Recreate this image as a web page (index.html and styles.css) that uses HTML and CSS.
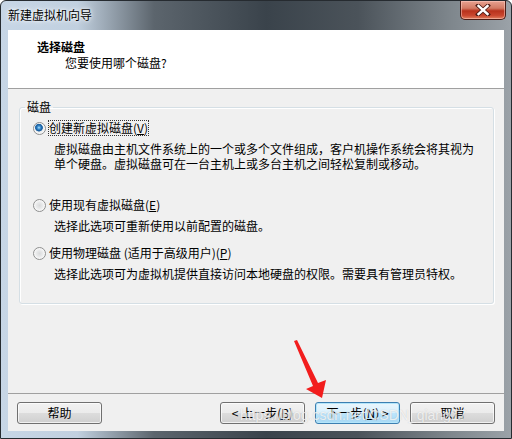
FILE: index.html
```html
<!DOCTYPE html>
<html lang="zh-CN">
<head>
    <meta charset="UTF-8">
    <title>新建虚拟机向导</title>
    <link rel="stylesheet" href="styles.css">
</head>
<body>
    <div class="window">
        <div class="titlebar">
            <span class="title">新建虚拟机向导</span>
            <div class="close-btn">
                <svg width="16" height="12" viewBox="0 0 16 12">
                    <path d="M3 1.5 L13 10.5 M13 1.5 L3 10.5" stroke="#4a1a14" stroke-width="4" stroke-linecap="square"/>
                    <path d="M3.5 2 L12.5 10 M12.5 2 L3.5 10" stroke="#ffffff" stroke-width="2.4" stroke-linecap="square"/>
                </svg>
            </div>
        </div>

        <div class="client">
            <div class="header">
                <div class="heading">选择磁盘</div>
                <div class="subheading">您要使用哪个磁盘?</div>
            </div>

            <div class="content">
                <fieldset class="group">
                    <legend>磁盘</legend>

                    <div class="option first">
                        <span class="radio checked"></span>
                        <span class="option-label focused">创建新虚拟磁盘(<u>V</u>)</span>
                    </div>
                    <div class="option-desc tall">虚拟磁盘由主机文件系统上的一个或多个文件组成，客户机操作系统会将其视为<br>单个硬盘。虚拟磁盘可在一台主机上或多台主机之间轻松复制或移动。</div>

                    <div class="option second">
                        <span class="radio"></span>
                        <span class="option-label">使用现有虚拟磁盘(<u>E</u>)</span>
                    </div>
                    <div class="option-desc">选择此选项可重新使用以前配置的磁盘。</div>

                    <div class="option third">
                        <span class="radio"></span>
                        <span class="option-label">使用物理磁盘 (适用于高级用户)(<u>P</u>)</span>
                    </div>
                    <div class="option-desc">选择此选项可为虚拟机提供直接访问本地硬盘的权限。需要具有管理员特权。</div>
                </fieldset>
            </div>

            <div class="footer">
                <button class="btn">帮助</button>
                <div class="spacer"></div>
                <button class="btn">&lt; 上一步(<u>B</u>)</button>
                <button class="btn default">下一步(<u>N</u>) &gt;</button>
                <button class="btn">取消</button>
            </div>
        </div>
    </div>

    <!-- annotation drawn over the screenshot -->
    <svg class="arrow" width="512" height="439" viewBox="0 0 512 439">
        <polygon points="294,341 297,340 318,383 326,380 322,398 306,389 313,386" fill="#f21d1d"/>
    </svg>
    <div class="watermark">https://blog.csdn.net/CSDN_qiang17</div>
</body>
</html>
```

FILE: styles.css
```css
body {
    margin: 0;
    width: 512px;
    height: 439px;
    overflow: hidden;
    font-family: "Noto Sans CJK SC", "Microsoft YaHei", sans-serif;
    font-size: 12px;
    color: #000;
    position: relative;
}

.window {
    box-sizing: border-box;
    width: 512px;
    height: 439px;
    padding: 0 7px 7px 7px;
    border: 1px solid #262b30;
    border-radius: 6px 6px 0 0;
    background: linear-gradient(90deg, #c7d6e6 0, #c1d0df 15%, #5c656d 30%, #3a434b 52%, #4b535a 70%, #7e868c 88%, #9ba2a8 100%);
    display: flex;
    flex-direction: column;
}

.titlebar {
    height: 29px;
    display: flex;
    align-items: flex-start;
    justify-content: space-between;
}

.title {
    margin-top: 6px;
    line-height: 16px;
    text-shadow: 0 0 6px #fff, 0 0 3px #fff;
}

.close-btn {
    width: 44px;
    height: 18px;
    margin-right: -2px;
    border: 1px solid #4c1d16;
    border-top: none;
    border-radius: 0 0 5px 5px;
    background: linear-gradient(#e8a291 0, #d27a64 40%, #b8321c 55%, #c9462e 80%, #e0805f 100%);
    box-shadow: inset 0 0 0 1px rgba(255, 210, 200, 0.5);
    display: flex;
    align-items: center;
    justify-content: center;
}

.client {
    flex: 1;
    background: #f0f0f0;
    display: flex;
    flex-direction: column;
}

.header {
    height: 57px;
    background: #fff;
    border-bottom: 1px solid #a0a0a0;
    padding-top: 9px;
    box-sizing: content-box;
    height: 49px;
    line-height: 16px;
}

.heading {
    font-weight: bold;
    padding-left: 29px;
}

.subheading {
    padding-left: 57px;
}

.content {
    flex: 1;
}

.group {
    margin: 10px 10px 0 11px;
    padding: 0 0 22px 0;
    border: 1px solid #d5dfe5;
    border-radius: 3px;
    box-shadow: inset 1px 1px 0 #fff, 1px 1px 0 #fff;
    line-height: 16px;
}

.group legend {
    margin-left: 5px;
    padding: 0 2px;
    line-height: 16px;
}

.option {
    display: flex;
    align-items: center;
    padding-left: 13px;
    height: 16px;
}

.option.first {
    margin-top: 5px;
}

.option.second {
    margin-top: 26px;
}

.option.third {
    margin-top: 12px;
}

.radio {
    box-sizing: border-box;
    width: 13px;
    height: 13px;
    border-radius: 50%;
    border: 1px solid #8e8f8f;
    background: radial-gradient(circle at 50% 50%, #d9dadb 0, #e8e9ea 3px, #f6f6f6 5px, #ffffff 6px);
    margin-right: 2px;
}

.radio.checked {
    background:
        radial-gradient(circle at 45% 42%, #b6e3fb 0, #3f94d6 1.5px, #1b5d9c 3px, #2b6fae 3.6px, rgba(255, 255, 255, 0) 4.2px),
        radial-gradient(circle at 50% 50%, #d9dadb 0, #e8e9ea 3px, #f6f6f6 5px, #ffffff 6px);
}

.option-label {
    border: 1px dotted transparent;
    padding: 0;
    line-height: 14px;
}

.option-label.focused {
    border-color: #333;
}

.option-desc {
    margin-top: 5px;
    padding-left: 34px;
    line-height: 15px;
}

.footer {
    height: 37px;
    border-top: 1px solid #a0a0a0;
    display: flex;
    align-items: flex-start;
    padding: 8px 9px 0 9px;
    box-sizing: border-box;
    height: 38px;
    gap: 10px;
}

.spacer {
    flex: 1;
}

.btn {
    width: 85px;
    height: 22px;
    padding: 0;
    font-family: inherit;
    font-size: 12px;
    line-height: 16px;
    color: #000;
    border: 1px solid #707070;
    border-radius: 3px;
    background: linear-gradient(#f2f2f2 0, #ebebeb 50%, #dddddd 50%, #cfcfcf 100%);
    box-shadow: inset 0 0 0 1px rgba(255, 255, 255, 0.7);
}

.btn.default {
    border-color: #3c7fb1;
    background: linear-gradient(#eaf6fd 0, #d9f0fc 50%, #bee6fd 50%, #a7d9f5 100%);
    box-shadow: inset 0 0 0 1px #b4e6fb;
}

.arrow {
    position: absolute;
    left: 0;
    top: 0;
    pointer-events: none;
}

.watermark {
    position: absolute;
    left: 240px;
    top: 407px;
    font-family: "Liberation Sans", sans-serif;
    font-size: 14px;
    line-height: 16px;
    color: rgba(255, 255, 255, 0.75);
    text-shadow: 0 0 1px rgba(150, 150, 150, 0.5);
    pointer-events: none;
}
```
